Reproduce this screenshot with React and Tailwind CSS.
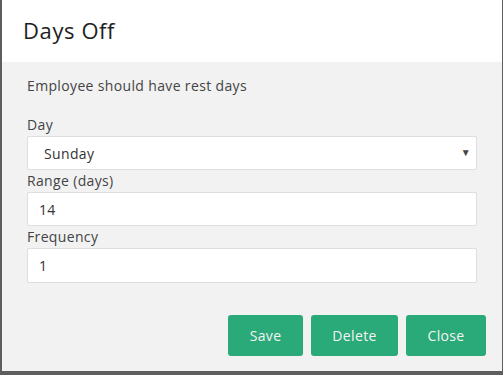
import React from "react";

const App = () => {
    return (
        <div
            className="h-[375px] w-[503px] bg-[#5e5e5e] pl-[2px] pr-px pb-[4px]"
            style={{ fontFamily: "'Open Sans', Lato, sans-serif" }}
        >
            <div className="h-full bg-[#f2f2f2] flex flex-col">
                {/* Header */}
                <div className="h-[62px] bg-white px-[21px] flex items-center">
                    <h1 className="text-[22px] tracking-[0.6px] text-[#1e1e1e] pb-[2px]">Days Off</h1>
                </div>

                {/* Body */}
                <div className="px-[25px] pt-[14px] text-[14px] tracking-[0.35px]">
                    <p className="leading-[20px] text-[#444]">
                        Employee should have rest days
                    </p>

                    <label className="block mt-[18px] leading-[22px] text-[#444]">
                        Day
                    </label>
                    <div className="relative">
                        <select className="appearance-none w-full h-[34px] bg-white border border-[#dedede] rounded-[2px] pl-[16px] text-[#333] outline-none">
                            <option>Sunday</option>
                        </select>
                        <span className="absolute right-[6px] top-[9px] text-[10px] text-[#444]">
                            ▼
                        </span>
                    </div>

                    <label className="block leading-[22px] text-[#444]">
                        Range (days)
                    </label>
                    <input
                        type="text"
                        defaultValue="14"
                        className="w-full h-[34px] bg-white border border-[#dedede] rounded-[2px] px-[11px] text-[#333] outline-none"
                    />

                    <label className="block leading-[22px] text-[#444]">
                        Frequency
                    </label>
                    <input
                        type="text"
                        defaultValue="1"
                        className="w-full h-[35px] bg-white border border-[#dedede] rounded-[2px] px-[11px] text-[#333] outline-none"
                    />
                </div>

                {/* Footer */}
                <div className="flex justify-end gap-[8px] pr-[16px] mt-[32px] text-[14px] tracking-[0.35px]">
                    <button className="w-[75px] h-[41px] rounded-[3px] bg-[#2aaa78] text-[#f4f4f4]">
                        Save
                    </button>
                    <button className="w-[87px] h-[41px] rounded-[3px] bg-[#2aaa78] text-[#f4f4f4]">
                        Delete
                    </button>
                    <button className="w-[80px] h-[41px] rounded-[3px] bg-[#2aaa78] text-[#f4f4f4]">
                        Close
                    </button>
                </div>
            </div>
        </div>
    );
};

export default App;
